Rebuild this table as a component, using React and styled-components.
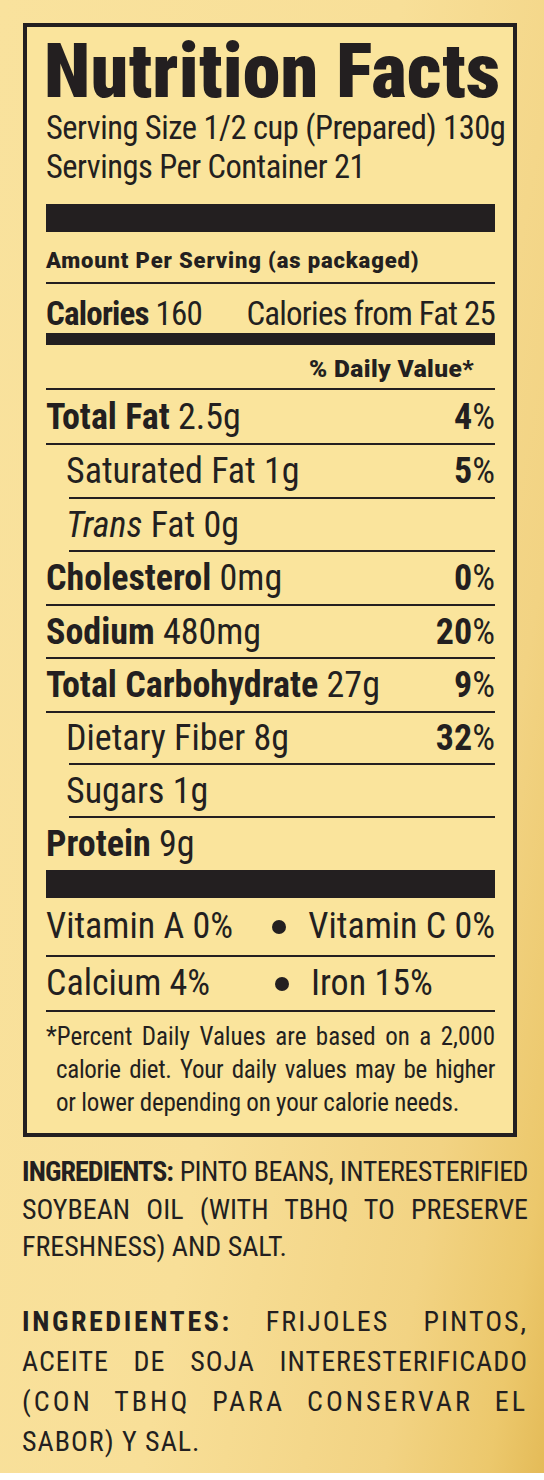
import React from 'react';
import styled, { createGlobalStyle } from 'styled-components';

const Global = createGlobalStyle`
  body {
    margin: 0;
    background: #ffffff;
    font-family: "Roboto Condensed", Roboto, "Liberation Sans", sans-serif;
    color: #231f20;
  }
`;

const ink = '#231f20';

const Page = styled.div`
  width: 544px;
  height: 1473px;
  box-sizing: border-box;
  padding-top: 23px;
  background: linear-gradient(100deg, #f9e29d 0%, #f8df98 50%, #f2d383 80%, #ecc86c 93%, #e4bb58 100%);
  overflow: hidden;
`;

const Label = styled.section`
  width: 494px;
  height: 1114px;
  margin-left: 23px;
  box-sizing: border-box;
  border: 4px solid ${ink};
  background: #fae49c;
  padding: 6px 18px 0 19px;
`;

const Title = styled.h1`
  margin: 0 0 0 -2px;
  font-size: 76px;
  line-height: 76px;
  font-weight: 900;
  letter-spacing: 0.2px;
  white-space: nowrap;
`;

const Serving = styled.div`
  font-size: 32.5px;
  line-height: 39px;
  letter-spacing: -0.5px;
  white-space: nowrap;
`;

const Bar = styled.div`
  height: 28px;
  background: ${ink};
  margin-top: ${(p) => p.$top || 0}px;
`;

const Row = styled.div`
  display: flex;
  justify-content: space-between;
  align-items: baseline;
  box-sizing: border-box;
  height: ${(p) => p.$h + p.$rule}px;
  padding-top: ${(p) => p.$pt || 0}px;
  line-height: ${(p) => p.$lh || p.$h - (p.$pt || 0)}px;
  margin-left: ${(p) => (p.$indent ? 23 : 0)}px;
  border-bottom: ${(p) => p.$rule}px solid ${ink};
  font-size: ${(p) => p.$size || 36}px;
  letter-spacing: ${(p) => p.$ls || 0}px;
  white-space: nowrap;
`;

const Head = styled.span`
  font-weight: 700;
`;

const Caption = styled.span`
  font-family: Roboto, "Liberation Sans", sans-serif;
  font-weight: 900;
  letter-spacing: ${(p) => p.$ls || 0}px;
  margin-left: ${(p) => (p.$right ? 'auto' : '0')};
  margin-right: ${(p) => (p.$right ? 21 : 0)}px;
`;

const Pct = styled.span`
  font-weight: 700;
  & > i {
    font-style: normal;
    font-weight: 400;
  }
`;

const Name = styled.span`
  margin-left: ${(p) => (p.$indent ? -3 : 0)}px;
  & > em {
    font-style: italic;
  }
`;

const Vit = styled.div`
  display: flex;
  align-items: center;
  height: ${(p) => p.$h}px;
  line-height: ${(p) => p.$h}px;
  border-bottom: 2px solid ${ink};
  font-size: 36px;
  white-space: nowrap;
`;

const VitCell = styled.span`
  width: ${(p) => (p.$first ? '229px' : 'auto')};
  margin-left: ${(p) => (p.$first ? 0 : 22)}px;
`;

const Dot = styled.span`
  flex: none;
  width: 14px;
  height: 14px;
  border-radius: 50%;
  background: ${ink};
`;

const Foot = styled.div`
  margin-top: 8px;
  font-size: 25px;
  line-height: 33px;
`;

const FootLine = styled.div`
  padding-left: ${(p) => (p.$first ? 0 : 10)}px;
  text-align: justify;
  text-align-last: ${(p) => (p.$last ? 'left' : 'justify')};
  letter-spacing: ${(p) => p.$ls || 0}px;
  white-space: nowrap;
`;

const Ingredients = styled.div`
  padding: 16px 16px 0 22px;
`;

const Line = styled.div`
  font-size: 28px;
  line-height: ${(p) => p.$lh || 37.5}px;
  letter-spacing: ${(p) => p.$ls || 0}px;
  text-align: justify;
  text-align-last: ${(p) => (p.$last ? 'left' : 'justify')};
  white-space: nowrap;
  margin-top: ${(p) => p.$top || 0}px;
`;

const Key = styled.b`
  font-weight: 700;
  letter-spacing: ${(p) => p.$ls || 0}px;
`;

const nutrients = [
  { name: 'Total Fat', val: '2.5g', pct: '4', h: 53 },
  { name: 'Saturated Fat', val: '1g', pct: '5', indent: true, h: 52 },
  { name: 'Trans', val: 'Fat 0g', indent: true, italic: true, h: 51 },
  { name: 'Cholesterol', val: '0mg', pct: '0', h: 52 },
  { name: 'Sodium', val: '480mg', pct: '20', h: 51 },
  { name: 'Total Carbohydrate', val: '27g', pct: '9', h: 52 },
  { name: 'Dietary Fiber', val: '8g', pct: '32', indent: true, h: 50 },
  { name: 'Sugars', val: '1g', indent: true, h: 51 },
];

const NutrientRow = ({ n }) => (
  <Row $h={n.h} $rule={2} $indent={n.indent} $pt={1}>
    <Name $indent={n.indent}>
      {n.indent ? (
        n.italic ? (
          <>
            <em>{n.name}</em> {n.val}
          </>
        ) : (
          `${n.name} ${n.val}`
        )
      ) : (
        <>
          <Head>{n.name}</Head> {n.val}
        </>
      )}
    </Name>
    {n.pct && (
      <Pct>
        {n.pct}
        <i>%</i>
      </Pct>
    )}
  </Row>
);

export default function App() {
  return (
    <>
      <Global />
      <Page>
        <Label>
          <Title>Nutrition Facts</Title>
          <Serving>Serving Size 1/2 cup (Prepared) 130g</Serving>
          <Serving>Servings Per Container 21</Serving>
          <Bar $top={17} />
          <Row $h={50} $rule={2} $pt={16} $lh={26} $size={22}>
            <Caption $ls={0.85}>Amount Per Serving (as packaged)</Caption>
          </Row>
          <Row $h={49} $rule={12} $pt={11} $lh={38} $size={33} $ls={-0.8}>
            <span>
              <Head>Calories</Head> 160
            </span>
            <span>Calories from Fat 25</span>
          </Row>
          <Row $h={43} $rule={2} $pt={9} $lh={30} $size={24.5}>
            <Caption $right $ls={0.4}>
              % Daily Value*
            </Caption>
          </Row>
          {nutrients.map((n) => (
            <NutrientRow key={n.name} n={n} />
          ))}
          <Row $h={52} $rule={0} $pt={1}>
            <span>
              <Head>Protein</Head> 9g
            </span>
          </Row>
          <Bar />
          <Vit $h={57}>
            <VitCell $first>Vitamin A 0%</VitCell>
            <Dot />
            <VitCell>Vitamin C 0%</VitCell>
          </Vit>
          <Vit $h={53}>
            <VitCell $first>Calcium 4%</VitCell>
            <Dot />
            <VitCell>Iron 15%</VitCell>
          </Vit>
          <Foot>
            <FootLine $first>*Percent Daily Values are based on a 2,000</FootLine>
            <FootLine $ls={-0.3}>calorie diet. Your daily values may be higher</FootLine>
            <FootLine $last $ls={-0.2}>or lower depending on your calorie needs.</FootLine>
          </Foot>
        </Label>
        <Ingredients>
          <Line $ls={-0.55}>
            <Key $ls={-0.9}>INGREDIENTS:</Key> PINTO BEANS, INTERESTERIFIED
          </Line>
          <Line>SOYBEAN OIL (WITH TBHQ TO PRESERVE</Line>
          <Line $last>FRESHNESS) AND SALT.</Line>
          <Line $top={36} $lh={40} $ls={2}>
            <Key $ls={2.6}>INGREDIENTES:</Key> FRIJOLES PINTOS,
          </Line>
          <Line $lh={40} $ls={1}>ACEITE DE SOJA INTERESTERIFICADO</Line>
          <Line $lh={40} $ls={3}>(CON TBHQ PARA CONSERVAR EL</Line>
          <Line $lh={40} $ls={1} $last>SABOR) Y SAL.</Line>
        </Ingredients>
      </Page>
    </>
  );
}
